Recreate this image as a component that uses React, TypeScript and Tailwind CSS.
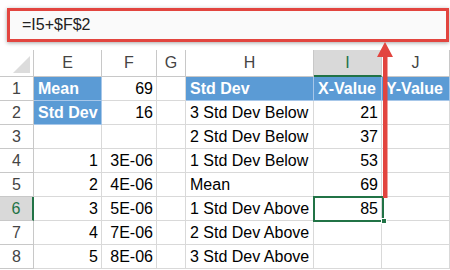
import React from "react";

const cols = ["E", "F", "G", "H", "I", "J"];

type Cell = { t?: string; align?: "l" | "r"; blue?: boolean };

const rows: Cell[][] = [
  [{ t: "Mean", blue: true }, { t: "69", align: "r" }, {}, { t: "Std Dev", blue: true }, { t: "X-Value", blue: true }, { t: "Y-Value", blue: true }],
  [{ t: "Std Dev", blue: true }, { t: "16", align: "r" }, {}, { t: "3 Std Dev Below" }, { t: "21", align: "r" }, {}],
  [{}, {}, {}, { t: "2 Std Dev Below" }, { t: "37", align: "r" }, {}],
  [{ t: "1", align: "r" }, { t: "3E-06", align: "r" }, {}, { t: "1 Std Dev Below" }, { t: "53", align: "r" }, {}],
  [{ t: "2", align: "r" }, { t: "4E-06", align: "r" }, {}, { t: "Mean" }, { t: "69", align: "r" }, {}],
  [{ t: "3", align: "r" }, { t: "5E-06", align: "r" }, {}, { t: "1 Std Dev Above" }, { t: "85", align: "r" }, {}],
  [{ t: "4", align: "r" }, { t: "7E-06", align: "r" }, {}, { t: "2 Std Dev Above" }, {}, {}],
  [{ t: "5", align: "r" }, { t: "8E-06", align: "r" }, {}, { t: "3 Std Dev Above" }, {}, {}],
];

export default function App() {
  return (
    <div
      className="relative w-[450px] h-[270px] bg-white overflow-hidden text-[16px] text-black"
      style={{ fontFamily: '"Liberation Sans", Arial, sans-serif' }}
    >
      <div className="h-[50px] pt-[8px] pl-[7px] pr-[1px]">
        <div className="h-[34px] border-[3px] border-[#e2453f] bg-[#fafafa] shadow-[0_1px_4px_rgba(0,0,0,0.35)] flex items-center pl-[12px] text-[#222]">
          =I5+$F$2
        </div>
      </div>
      <div className="grid grid-cols-[34px_68px_55px_29px_128px_68px_68px] grid-rows-[27px_repeat(8,24px)]">
        <div className="relative border-r border-b border-[#c8c8c8] bg-white">
          <svg className="absolute left-[13px] top-[6px]" width="17" height="17" viewBox="0 0 17 17">
            <polygon points="17,0 17,17 0,17" fill="#dcdcdc" />
          </svg>
        </div>
        {cols.map((c) => (
          <div
            key={c}
            className={
              c === "I"
                ? "flex items-center justify-center border-r border-[#c8c8c8] border-b-2 border-b-[#217346] bg-[#d9d9d9] text-[#217346]"
                : "flex items-center justify-center border-r border-b border-[#c8c8c8] text-[#444]"
            }
          >
            {c}
          </div>
        ))}
        {rows.map((r, i) => (
          <React.Fragment key={i}>
            <div
              className={
                i === 5
                  ? "flex items-center justify-center border-b border-[#c8c8c8] border-r-2 border-r-[#217346] bg-[#d9d9d9] text-[#217346]"
                  : "flex items-center justify-center border-r border-b border-[#c8c8c8] text-[#444]"
              }
            >
              {i + 1}
            </div>
            {r.map((cell, j) => (
              <div
                key={j}
                className={
                  (cell.blue
                    ? "bg-[#5b9bd5] text-white font-bold border-r border-b border-[#a7c7e9] "
                    : "border-r border-b border-[#d9d9d9] ") +
                  (cell.align === "r" ? "justify-end pr-[3px] " : "justify-start pl-[4px] ") +
                  "flex items-center whitespace-nowrap overflow-visible"
                }
              >
                {cell.t}
              </div>
            ))}
          </React.Fragment>
        ))}
      </div>
      {/* selected cell I6 */}
      <div className="absolute left-[313px] top-[196px] w-[71px] h-[26px] border-2 border-[#217346]" />
      <div className="absolute left-[381px] top-[218px] w-[6px] h-[6px] bg-[#217346] border border-white" />
      {/* red arrow */}
      <svg className="absolute left-[376px] top-[42px]" width="18" height="156" viewBox="0 0 18 156">
        <rect x="7" y="12" width="4.5" height="144" fill="#e2453f" />
        <polygon points="9,0 17,15 1,15" fill="#e2453f" />
      </svg>
    </div>
  );
}
